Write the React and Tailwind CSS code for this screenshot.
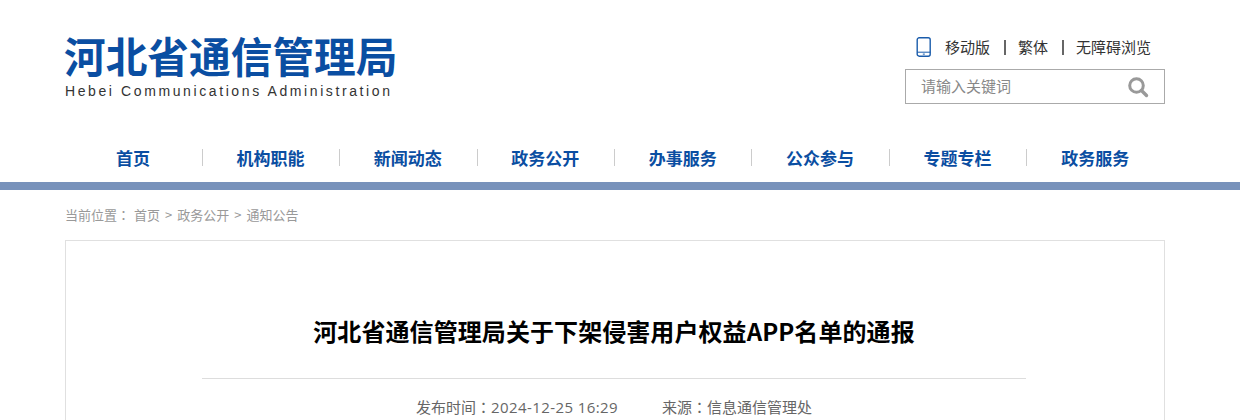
const nav = ["首页","机构职能","新闻动态","政务公开","办事服务","公众参与","专题专栏","政务服务"];
const cjk = { fontFamily: '"Noto Sans CJK SC", sans-serif' };

function Colon() {
  return <span className="font-['Noto_Sans_CJK_TC',sans-serif]">：</span>;
}

export default function App() {
  return (
    <div className="h-[420px] w-[1240px] overflow-hidden bg-white" style={cjk}>
      <header className="mx-[65px] flex h-[128px] w-[1100px] items-start justify-between">
        <div className="pt-[32px]">
          <div className="ml-[-1px] text-[41.7px] leading-[46px] font-bold text-[#0a4ea2] whitespace-nowrap">河北省通信管理局</div>
          <div className="mt-[4px] font-['Liberation_Sans',sans-serif] text-[14px] leading-[18px] tracking-[2.6px] text-[#333] whitespace-nowrap">Hebei Communications Administration</div>
        </div>
        <div className="flex w-[260px] flex-col items-stretch pt-[37px]">
          <div className="flex h-[20px] items-center text-[15px] leading-[20px] text-[#333] whitespace-nowrap">
            <svg className="ml-[11px] mr-[13px]" width="16" height="20" viewBox="0 0 16 20" fill="none">
              <rect x="1.2" y="0.8" width="13" height="18.4" rx="2" stroke="#1a5cab" strokeWidth="1.4"/>
              <path d="M1 15.2h13.5" stroke="#1a5cab" strokeWidth="1"/>
              <rect x="6.8" y="16.6" width="2" height="1" fill="#1a5cab"/>
            </svg>
            <span>移动版</span>
            <span className="ml-[14px] mr-[12px] h-[15px] w-[2px] bg-[#666]"></span>
            <span>繁体</span>
            <span className="ml-[14px] mr-[12px] h-[15px] w-[2px] bg-[#666]"></span>
            <span>无障碍浏览</span>
          </div>
          <div className="mt-[12px] flex h-[35px] items-center justify-between border border-[#aaa] pl-[15px] pr-[15px]">
            <span className="text-[15px] text-[#888]">请输入关键词</span>
            <svg width="22" height="22" viewBox="0 0 22 22" fill="none">
              <circle cx="9.5" cy="9.5" r="6.8" stroke="#999" strokeWidth="3"/>
              <path d="M14.5 14.5l5 5" stroke="#999" strokeWidth="3.4" strokeLinecap="round"/>
            </svg>
          </div>
        </div>
      </header>

      <nav className="mx-[65px] flex h-[54px] w-[1100px] items-start pl-[0.4px] pt-[21px]">
        {nav.map((t) => (
          <div key={t} className="flex h-[17px] w-[137.4px] items-start justify-center border-r border-[#ccc] last:border-r-0">
            <span className="mr-[1px] text-[17px] font-bold leading-[17px] text-[#0a4ea2]">{t}</span>
          </div>
        ))}
      </nav>
      <div className="h-[8px] bg-[#7892bb]"></div>

      <div className="mx-[65px] w-[1100px]">
        <div className="flex h-[50px] items-center text-[13px] text-[#999] whitespace-nowrap">
          <span>当前位置<Colon /></span>
          <span className="ml-[4px]">首页</span>
          <span className="mx-[5px]">&gt;</span>
          <span>政务公开</span>
          <span className="mx-[5px]">&gt;</span>
          <span>通知公告</span>
        </div>
        <div className="h-[300px] border border-[#e0e0e0] pl-[136px] pr-[138px] pt-[72px]">
          <h1 className="text-center text-[24px] font-bold leading-[36px] tracking-[0.08px] text-black whitespace-nowrap">河北省通信管理局关于下架侵害用户权益APP名单的通报</h1>
          <div className="mt-[29px] border-t border-[#ddd] pt-[17px] text-center text-[15px] leading-[22px] text-[#666] whitespace-nowrap">
            <span>发布时间<Colon /><span className="font-['Open_Sans',sans-serif] tracking-[0.42px]">2024-12-25 16:29</span></span>
            <span className="ml-[44px]">来源<Colon />信息通信管理处</span>
          </div>
        </div>
      </div>
    </div>
  );
}
